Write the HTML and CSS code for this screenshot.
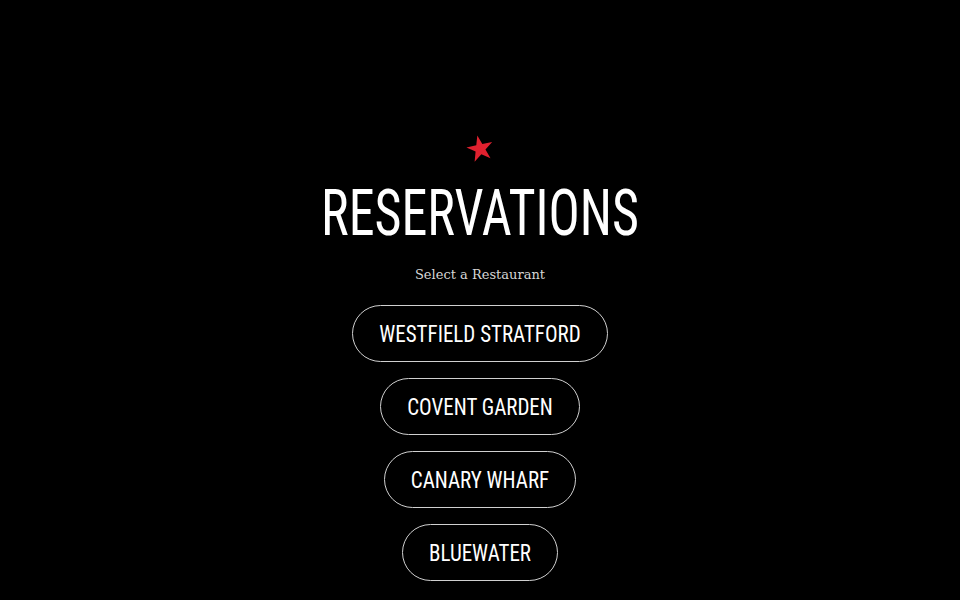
FILE: index.html
```html
<!DOCTYPE html>
<html lang="en">
<head>
<meta charset="utf-8">
<title>Reservations</title>
<link rel="stylesheet" href="styles.css">
</head>
<body>
<main class="page">
  <svg class="star" viewBox="0 0 100 100" aria-hidden="true">
    <polygon points="50,4 61,38 97,38 68,59 79,94 50,73 21,94 32,59 3,38 39,38" fill="#e0212f" transform="rotate(-12 50 50)"/>
  </svg>
  <h1 class="title"><span class="tall">RESERVATIONS</span></h1>
  <p class="subtitle">Select a Restaurant</p>
  <nav class="list">
    <a class="pill" href="#"><span class="pill-text">WESTFIELD STRATFORD</span></a>
    <a class="pill" href="#"><span class="pill-text">COVENT GARDEN</span></a>
    <a class="pill" href="#"><span class="pill-text">CANARY WHARF</span></a>
    <a class="pill" href="#"><span class="pill-text">BLUEWATER</span></a>
  </nav>
</main>
</body>
</html>
```

FILE: styles.css
```css
html, body {
  margin: 0;
  padding: 0;
  background: #000;
  color: #fff;
}
.page {
  display: flex;
  flex-direction: column;
  align-items: center;
  padding-top: 134px;
}
.star {
  width: 28px;
  height: 28px;
  display: block;
}
.title {
  margin: 20px 0 0;
  font-family: "Roboto Condensed", sans-serif;
  font-weight: 400;
  font-size: 52px;
  line-height: 64px;
}
.tall {
  display: inline-block;
  transform: scaleY(1.23);
}
.subtitle {
  margin: 19px 0 0;
  font-family: "DejaVu Serif", "Liberation Serif", serif;
  font-size: 13px;
  line-height: 20px;
  color: #d6d6d6;
}
.list {
  display: flex;
  flex-direction: column;
  align-items: center;
  gap: 16px;
  margin-top: 20px;
}
.pill {
  display: flex;
  align-items: center;
  justify-content: center;
  height: 55px;
  padding: 0 26px;
  border: 1px solid #d0d0d0;
  border-radius: 29px;
  color: #fff;
  text-decoration: none;
  font-family: "Roboto Condensed", sans-serif;
  font-weight: 400;
  font-size: 21px;
}
.pill-text {
  display: inline-block;
  transform: scaleY(1.12);
}
```
